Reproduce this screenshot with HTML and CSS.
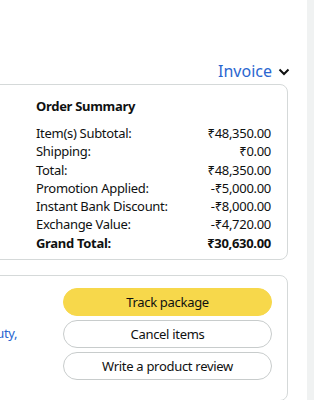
FILE: index.html
```html
<!DOCTYPE html>
<html lang="en">
<head>
  <meta charset="UTF-8">
  <title>Order details</title>
  <link rel="stylesheet" href="styles.css">
</head>
<body>
<div class="page">
  <main class="content">
    <div class="invoice-row">
      <a class="invoice" href="#">Invoice
        <svg class="chevron" width="12" height="8" viewBox="0 0 12 8"><path d="M1.5 1.5 L6 6 L10.5 1.5" fill="none" stroke="#0f1111" stroke-width="2"/></svg>
      </a>
    </div>

    <section class="card summary">
      <h3>Order Summary</h3>
      <div class="row"><span>Item(s) Subtotal:</span><span>₹48,350.00</span></div>
      <div class="row"><span>Shipping:</span><span>₹0.00</span></div>
      <div class="row"><span>Total:</span><span>₹48,350.00</span></div>
      <div class="row"><span>Promotion Applied:</span><span>-₹5,000.00</span></div>
      <div class="row"><span>Instant Bank Discount:</span><span>-₹8,000.00</span></div>
      <div class="row"><span>Exchange Value:</span><span>-₹4,720.00</span></div>
      <div class="row total"><span>Grand Total:</span><span>₹30,630.00</span></div>
    </section>

    <section class="card shipment">
      <div class="ship-info">
        <a href="#">Beauty,</a>
      </div>
      <div class="actions">
        <button class="btn primary">Track package</button>
        <button class="btn">Cancel items</button>
        <button class="btn">Write a product review</button>
      </div>
    </section>
  </main>
  <aside class="rail"></aside>
</div>
</body>
</html>
```

FILE: styles.css
```css
body {
  margin: 0;
  font-family: "Noto Sans", Arial, sans-serif;
  color: #0f1111;
  background-color: #fff;
}

.page {
  display: flex;
  height: 400px;
  overflow: hidden;
}

.content {
  width: 307px;
  padding-right: 19px;
  box-sizing: border-box;
}

.rail {
  flex: 1;
  background-color: #f0f2f2;
}

.invoice-row {
  display: flex;
  justify-content: flex-end;
  padding-top: 60px;
  margin-bottom: 2px;
  margin-right: -2px;
}

.invoice {
  display: flex;
  align-items: center;
  gap: 6px;
  font-size: 16px;
  line-height: 22px;
  color: #2a66d0;
  text-decoration: none;
}

.chevron {
  margin-top: 2px;
}

.card {
  border: 1px solid #d5d9d9;
  border-radius: 8px;
  margin-left: -40px;
}

.summary {
  padding: 12px 16px 7px 75px;
  font-size: 13px;
  letter-spacing: -0.3px;
}

.summary h3 {
  margin: 0 0 9px;
  font-size: 13px;
  line-height: 18px;
  font-weight: 700;
}

.row {
  display: flex;
  justify-content: space-between;
  line-height: 18.3px;
}

.row.total {
  font-weight: 700;
}

.shipment {
  margin-top: 15px;
  padding: 12px 15px 20px 13px;
  display: flex;
  justify-content: space-between;
  align-items: center;
}

.ship-info {
  margin-bottom: 4px;
}

.ship-info a {
  font-size: 13px;
  letter-spacing: -0.3px;
  color: #2a66d0;
  text-decoration: none;
}

.actions {
  width: 209px;
  display: flex;
  flex-direction: column;
  gap: 4px;
}

.btn {
  height: 28px;
  border: 1px solid #c8cccc;
  border-radius: 14px;
  background-color: #fff;
  font-family: "Noto Sans", Arial, sans-serif;
  font-size: 13px;
  letter-spacing: -0.3px;
  color: #0f1111;
}

.btn.primary {
  background-color: #f7d84b;
  border-color: #f7d84b;
}
```
